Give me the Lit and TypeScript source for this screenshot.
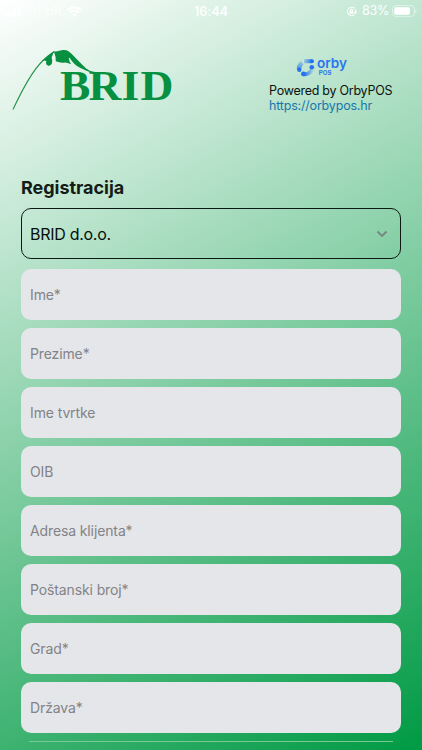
import { LitElement, html, css, svg } from "lit";
import { customElement, property } from "lit/decorators.js";

@customElement("status-bar")
class StatusBar extends LitElement {
  static styles = css`
    :host { display: grid; grid-template-columns: 1fr auto 1fr; height: 22px; align-items: center; color: #fff; font: 500 13px/22px Inter, sans-serif; }
    svg { display: block; }
    .left, .right { display: flex; align-items: center; }
    .left { padding-left: 4px; gap: 5px; font-weight: 400; }
    .right { justify-content: flex-end; padding-right: 5px; gap: 5px; font-weight: 400; }
    .carrier { margin-left: 2px; font-size: 12.5px; opacity: .9; }
    .percent { font-size: 12.6px; letter-spacing: -.35px; }
    .time { letter-spacing: -.1px; }
    .battery { margin-left: -2px; }
  `;
  render() {
    return html`
      <div class="left">
        <svg width="17" height="11" viewBox="0 0 17 11" fill="#fff"><rect y="7" width="3" height="4" rx=".8"/><rect x="4.5" y="5" width="3" height="6" rx=".8"/><rect x="9" y="2.5" width="3" height="8.5" rx=".8"/><rect x="13.5" width="3" height="11" rx=".8"/></svg>
        <span class="carrier">A1 HR</span>
        <svg width="15" height="11" viewBox="0 0 15 11" fill="none" stroke="#fff" stroke-width="2.2"><path d="M.8 4.1a9.4 9.4 0 0 1 13.4 0M3.2 6.7a6.1 6.1 0 0 1 8.6 0"/><path d="M5.2 8.4a3.3 3.3 0 0 1 4.6 0L7.5 10.8z" fill="#fff" stroke="none"/></svg>
      </div>
      <div class="time">16:44</div>
      <div class="right">
        <svg width="11" height="11" viewBox="0 0 12 12" fill="none" stroke="#fff" stroke-width="1.1"><path d="M9.4 2.6A4.6 4.6 0 1 0 9.4 9.2M10.4 7.4A4.6 4.6 0 0 0 10 3.6M8.8 6.4l1.6 1.4 1.3-1.7"/><rect x="3.8" y="5.4" width="4.2" height="3.1" fill="#fff" stroke="none"/><path d="M4.7 5.5V4.6a1.2 1.2 0 0 1 2.4 0v.9"/></svg>
        <span class="percent">83%</span>
        <svg class="battery" width="25" height="12" viewBox="0 0 25 12"><rect x=".6" y=".6" width="21.8" height="10.8" rx="3" fill="none" stroke="#fff" stroke-opacity=".5"/><rect x="2.2" y="2.2" width="15.8" height="7.6" rx="1.7" fill="#fff"/><path d="M23.3 4v4q1.3-.5 1.3-2t-1.3-2" fill="#fff" fill-opacity=".55"/></svg>
      </div>`;
  }
}

@customElement("brid-logo")
class BridLogo extends LitElement {
  static styles = css`
    :host, svg { display: block; }
    .word { font: 700 43px "Liberation Serif", serif; fill: #07903f; }
  `;
  render() {
    return html`<svg width="166" height="66" viewBox="10 46 166 66">
      <path d="M13 109.5C23 88 32 71 43 60.5Q49 55 54 51.8" fill="none" stroke="#27924e" stroke-width="1.1"/>
      <path d="M41.8 61.2Q48 55 54 51.2Q52.6 55 51.6 57.5Q52.8 60.5 52 63.2Q50.6 66.4 47.8 65.4Q45.2 64.4 46.4 61.2Q44.6 59.8 41.8 61.2Z" fill="#07903f"/>
      <path d="M53.5 51.2C57 52 59.5 50.6 62.5 50.1C66 49.5 68.3 50.6 71 53.3L82 64.5Q86 69.2 92 72.4Q86 71 80 67.8C75.5 65.4 73 62.5 70.6 59.2Q69.6 57.4 68.8 58Q69 61.4 71 64.2Q67 62.2 65 62.4Q60.8 63.2 55.8 61.2Q55.9 56.5 54.4 53Z" fill="#07903f"/>
      <path d="M84 68.4Q89 71.6 96 72.8" fill="none" stroke="#07903f" stroke-width="1.1"/>
      <g transform="translate(60 100) scale(1.06 1)"><text class="word" x="0 27 58 75.9">BRID</text></g>
    </svg>`;
  }
}

@customElement("orby-logo")
class OrbyLogo extends LitElement {
  static styles = css`
    :host, svg { display: block; }
    svg { overflow: visible; }
    text { fill: #2a75ee; font-family: Inter, sans-serif; font-weight: 600; }
    .name { font-size: 13.4px; }
    .pos { font-size: 6px; font-weight: 700; }
  `;
  render() {
    const arcs = svg`
      <path d="M304 61.2H312" stroke="url(#top)" stroke-width="4"/>
      <path d="M302.2 62.4Q298.8 65 299 69.2" stroke="url(#side)" stroke-width="4.4"/>
      <path d="M303.5 74.2Q309.2 74.8 312 69.6" stroke="url(#base)" stroke-width="4"/>`;
    return html`<svg width="54" height="22" viewBox="295 57 54 22">
      <defs>
        <linearGradient id="top" gradientUnits="userSpaceOnUse" x1="303" y1="0" x2="312" y2="0"><stop stop-color="#2573f0" stop-opacity=".15"/><stop offset="1" stop-color="#2573f0"/></linearGradient>
        <linearGradient id="side" gradientUnits="userSpaceOnUse" x1="0" y1="61" x2="0" y2="70"><stop stop-color="#2573f0" stop-opacity=".2"/><stop offset="1" stop-color="#2573f0" stop-opacity=".8"/></linearGradient>
        <linearGradient id="base" gradientUnits="userSpaceOnUse" x1="304" y1="0" x2="313" y2="0"><stop stop-color="#2573f0"/><stop offset="1" stop-color="#2573f0" stop-opacity=".15"/></linearGradient>
      </defs>
      <g fill="none">${arcs}</g>
      <g fill="#2573f0"><circle cx="312" cy="61.2" r="2"/><circle cx="299.3" cy="69.8" r="2.2"/><circle cx="303.4" cy="73.9" r="2.4"/><circle cx="311.8" cy="67.2" r="2.3"/></g>
      <text class="name" x="317" y="67.8" textLength="30" lengthAdjust="spacingAndGlyphs">orby</text>
      <text class="pos" x="318.8" y="75.3" textLength="12.6" lengthAdjust="spacingAndGlyphs">POS</text>
    </svg>`;
  }
}

@customElement("form-field")
class FormField extends LitElement {
  @property() label = "";
  static styles = css`
    :host { display: flex; align-items: center; box-sizing: border-box; height: 51px; padding: 1px 9px 0; border-radius: 10px; background: #e5e6ea; color: #828386; font: 400 14px/20px Inter, sans-serif; letter-spacing: -.12px; }
  `;
  render() { return html`<span>${this.label}</span>`; }
}

@customElement("app-root")
class AppRoot extends LitElement {
  static styles = css`
    :host { display: block; height: 750px; overflow: hidden; background: linear-gradient(150.63deg, #fff, #009a44); font-family: Inter, sans-serif; }
    .header { display: flex; justify-content: space-between; padding: 24px 29px 0 10px; height: 131px; }
    .powered { width: 124px; padding-top: 11px; font-size: 12.5px; line-height: 15px; letter-spacing: -.26px; color: #0b1410; white-space: nowrap; }
    .powered orby-logo { margin: 0 0 4px 26px; letter-spacing: 0; }
    .link { color: #1877ad; letter-spacing: -.19px; }
    .form { display: flex; flex-direction: column; gap: 8px; padding: 0 21px; }
    h1 { margin: 0; height: 23px; font-size: 18px; line-height: 21px; font-weight: 700; letter-spacing: -.03px; color: #141c18; }
    .select { display: flex; justify-content: space-between; align-items: center; box-sizing: border-box; height: 51px; margin-bottom: 2px; padding: 0 12px 0 8px; border: 1px solid #0c1812; border-radius: 10px; font-size: 16px; letter-spacing: -.28px; color: #06100b; }
    .select svg { display: block; }
    .next { height: 1px; margin: 0 8px; background: #77ca96; }
  `;
  render() {
    const fields = ["Ime*", "Prezime*", "Ime tvrtke", "OIB", "Adresa klijenta*", "Poštanski broj*", "Grad*", "Država*"];
    return html`
      <status-bar></status-bar>
      <div class="header">
        <brid-logo></brid-logo>
        <div class="powered">
          <orby-logo></orby-logo>
          <div>Powered by OrbyPOS</div>
          <div class="link">https://orbypos.hr</div>
        </div>
      </div>
      <div class="form">
        <h1>Registracija</h1>
        <div class="select"><span>BRID d.o.o.</span><svg width="12" height="8" viewBox="0 0 12 8" fill="none" stroke="#7b8580" stroke-width="1.9"><path d="M1.5 1.5L6 6l4.5-4.5"/></svg></div>
        ${fields.map((f) => html`<form-field label=${f}></form-field>`)}
        <div class="next"></div>
      </div>`;
  }
}
